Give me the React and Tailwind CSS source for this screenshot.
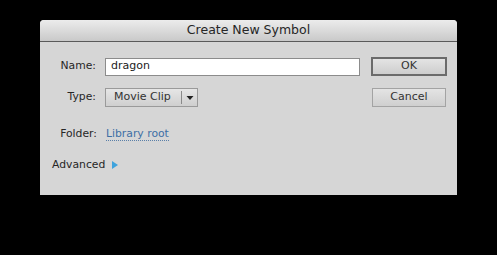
export default function App() {
  const font = { fontFamily: '"DejaVu Sans", "Liberation Sans", sans-serif' };
  return (
    <div className="w-[497px] h-[255px] bg-black pt-[20px] pl-[40px]" style={font}>
      <div className="w-[417px] h-[175px] bg-[#d6d6d6] rounded-t-[4px] overflow-hidden flex flex-col">
        <div className="h-[22px] shrink-0 bg-gradient-to-b from-[#ececec] to-[#c9c9c9] border-b border-[#5a5a5a] flex items-center justify-center text-[12.5px] text-[#262626]">
          Create New Symbol
        </div>
        <div className="flex flex-col pt-[15px] text-[10.8px] text-[#262626]">
          <div className="flex items-center h-[19px]">
            <div className="w-[56px] text-right">Name:</div>
            <div className="ml-[9px] w-[255px] h-[18px] bg-white border border-[#8c8c8c] flex items-center pl-[5px] text-[11px] text-[#222]">
              dragon
            </div>
            <button className="ml-[11px] w-[76px] h-[19px] border-2 border-[#6b6b6b] bg-gradient-to-b from-[#e4e4e4] to-[#cdcdcd] text-[11px] text-[#333] flex items-center justify-center">
              OK
            </button>
          </div>
          <div className="flex items-center h-[19px] mt-[12px]">
            <div className="w-[56px] text-right">Type:</div>
            <div className="ml-[9px] w-[93px] h-[19px] border border-[#9a9a9a] bg-gradient-to-b from-[#e6e6e6] to-[#cfcfcf] flex items-center text-[11px] text-[#333]">
              <span className="pl-[8px] w-[75px]">Movie Clip</span>
              <span className="h-[13px] border-l border-[#8a8a8a]"></span>
              <svg width="8" height="6" viewBox="0 0 8 6" className="ml-[4px]">
                <path d="M0.5 1 L7.5 1 L4 5 Z" fill="#222" />
              </svg>
            </div>
            <button className="ml-[174px] w-[74px] h-[19px] border border-[#a3a3a3] bg-gradient-to-b from-[#e4e4e4] to-[#cfcfcf] text-[11px] text-[#333] flex items-center justify-center">
              Cancel
            </button>
          </div>
          <div className="flex items-center h-[16px] mt-[19px]">
            <div className="w-[57px] text-right">Folder:</div>
            <span className="ml-[9px] text-[#3d6fa5] border-b border-dotted border-[#5a7fa8] leading-[13px]">Library root</span>
          </div>
          <div className="flex items-center h-[16px] mt-[15px] pl-[12px]">
            <span>Advanced</span>
            <svg width="6" height="8" viewBox="0 0 6 8" className="ml-[7px]">
              <path d="M0 0 L6 4 L0 8 Z" fill="#3ea3dd" />
            </svg>
          </div>
        </div>
      </div>
    </div>
  );
}
